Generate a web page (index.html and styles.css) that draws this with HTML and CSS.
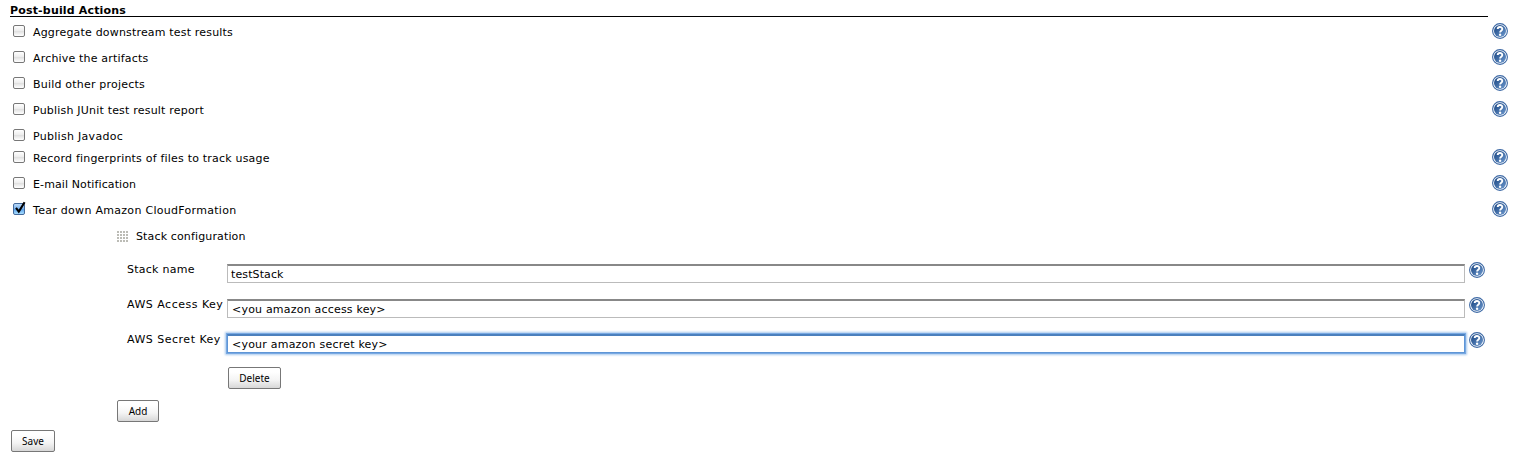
FILE: index.html
```
<!DOCTYPE html>
<html lang="en">
<head>
<meta charset="utf-8">
<title>Post-build Actions</title>
<link rel="stylesheet" href="styles.css">
</head>
<body>
<svg class="defs" width="0" height="0" aria-hidden="true">
  <defs>
    <linearGradient id="blue" x1="0" y1="0" x2="1" y2="1">
      <stop offset="0" stop-color="#16427f"/><stop offset="1" stop-color="#6f9bd0"/>
    </linearGradient>
    <symbol id="help" viewBox="0 0 16 16">
      <circle cx="8" cy="8" r="7.4" fill="#fff" stroke="#3d69a5" stroke-width="1.1"/>
      <circle cx="8" cy="8" r="6" fill="url(#blue)"/>
      <path d="M5.7 6.1C5.7 3.3 10.3 3.3 10.3 6C10.3 7.7 8.1 7.7 8.1 9.5" fill="none" stroke="#fff" stroke-width="1.9"/>
      <circle cx="8.1" cy="11.8" r="1.2" fill="#fff"/>
    </symbol>
  </defs>
</svg>
<form class="page">
  <h1 class="heading"><span class="t-head">Post-build Actions</span></h1>
  <div class="row"><i class="box"></i><span class="label t1">Aggregate downstream test results</span><svg class="help"><use href="#help"/></svg></div>
  <div class="row"><i class="box"></i><span class="label t2">Archive the artifacts</span><svg class="help"><use href="#help"/></svg></div>
  <div class="row"><i class="box"></i><span class="label t3">Build other projects</span><svg class="help"><use href="#help"/></svg></div>
  <div class="row"><i class="box"></i><span class="label t4">Publish JUnit test result report</span><svg class="help"><use href="#help"/></svg></div>
  <div class="row short"><i class="box"></i><span class="label t5">Publish Javadoc</span></div>
  <div class="row"><i class="box"></i><span class="label t6">Record fingerprints of files to track usage</span><svg class="help"><use href="#help"/></svg></div>
  <div class="row"><i class="box"></i><span class="label t7">E-mail Notification</span><svg class="help"><use href="#help"/></svg></div>
  <div class="row"><i class="box checked"><svg class="tick" viewBox="0 0 13 14"><path d="M2 6.8L4.8 10.6L10.6 1.2" fill="none" stroke="#000" stroke-width="2.1"/></svg></i><span class="label t8">Tear down Amazon CloudFormation</span><svg class="help"><use href="#help"/></svg></div>
  <section class="stack">
    <div class="stack-title"><i class="grip"></i><span class="t9">Stack configuration</span></div>
    <div class="field"><span class="name t10">Stack name</span><div class="input first"><span class="t11">testStack</span></div><svg class="help"><use href="#help"/></svg></div>
    <div class="field"><span class="name t12">AWS Access Key</span><div class="input"><span class="t13">&lt;you amazon access key&gt;</span></div><svg class="help"><use href="#help"/></svg></div>
    <div class="field"><span class="name t14">AWS Secret Key</span><div class="input focus"><span class="t15">&lt;your amazon secret key&gt;</span></div><svg class="help"><use href="#help"/></svg></div>
    <button type="button" class="btn delete">Delete</button>
    <button type="button" class="btn add">Add</button>
  </section>
  <button type="button" class="btn save">Save</button>
</form>
</body>
</html>
```
FILE: styles.css
```
* { box-sizing: border-box; }
body { margin: 0; background: #fff; color: #000; font: 11px/14px "DejaVu Sans", Verdana, sans-serif; white-space: nowrap; }
.defs { display: block; }
.page { display: flex; flex-direction: column; height: 461px; }
.heading { margin: 0 25px 1px 10px; height: 17px; padding-top: 4px; border-bottom: 1px solid #000; font-size: 11px; line-height: 14px; font-weight: bold; }
.row { display: flex; align-items: flex-start; height: 26px; padding: 5px 5px 0 13px; }
.row.short { height: 22px; }
.box { width: 12px; height: 12px; margin: 2px 8px 0 0; border: 1px solid #777; border-radius: 2px; background: linear-gradient(#fff 0%, #eee 45%, #dedede 50%, #fff 100%); }
.box.checked { border-color: #446a9c; background: linear-gradient(#b9d9f8 0%, #7fb5ee 45%, #559de8 50%, #a8deff 100%); }
.tick { display: block; width: 13px; height: 14px; margin: -3px 0 0 0; overflow: visible; }
.label { margin-top: 3px; }
.help { flex: none; width: 16px; height: 16px; margin-left: auto; }
.stack { display: flex; flex-direction: column; align-items: flex-start; margin: 8px 28px 0 117px; }
.stack-title { display: flex; height: 31px; }
.grip { width: 11px; height: 12px; margin: 1px 8px 0 0; background: radial-gradient(circle at 1px 1px, #bcbcb6 0.9px, transparent 1.1px) 0 0 / 3px 3px; }
.field { display: flex; align-self: stretch; height: 35px; }
.name { width: 110px; padding-left: 10px; margin-top: 2px; }
.input { width: 1238px; height: 19px; margin-top: 3px; padding: 2px 4px 0; border: 1px solid #bbb; border-top: 2px solid #888; background: #fff; }
.input.first { padding-left: 3px; }
.input.focus { border: 1px solid #5e95d6; border-top: 2px solid #4b80bd; box-shadow: 0 0 0 1px #78a9e2, 0 0 2px 2px #a9c9ed; }
.field .help { margin-top: 1px; }
.btn { flex: none; height: 22px; padding: 0; border: 1px solid #777; border-radius: 2px; color: #000; background: linear-gradient(#fff 20%, #f4f4f4 60%, #d7d7d7); font: 10px/18px "Noto Sans", sans-serif; }
.delete { width: 53px; margin: 1px 0 0 111px; }
.add { width: 42px; margin-top: 11px; }
.save { width: 44px; margin: 8px 0 0 11px; }

/* Tracking per label */
.t-head { letter-spacing: 0.17px; }
.t1, .t2 { letter-spacing: 0.18px; }
.t3, .t4, .t6, .t13 { letter-spacing: 0.2px; }
.t5, .t8 { letter-spacing: 0.29px; }
.t7, .t11 { letter-spacing: 0.11px; }
.t9 { letter-spacing: 0.14px; }
.t10 { letter-spacing: 0.25px; }
.t12, .t14 { letter-spacing: 0.5px; }
.t15 { letter-spacing: 0.22px; }
```
